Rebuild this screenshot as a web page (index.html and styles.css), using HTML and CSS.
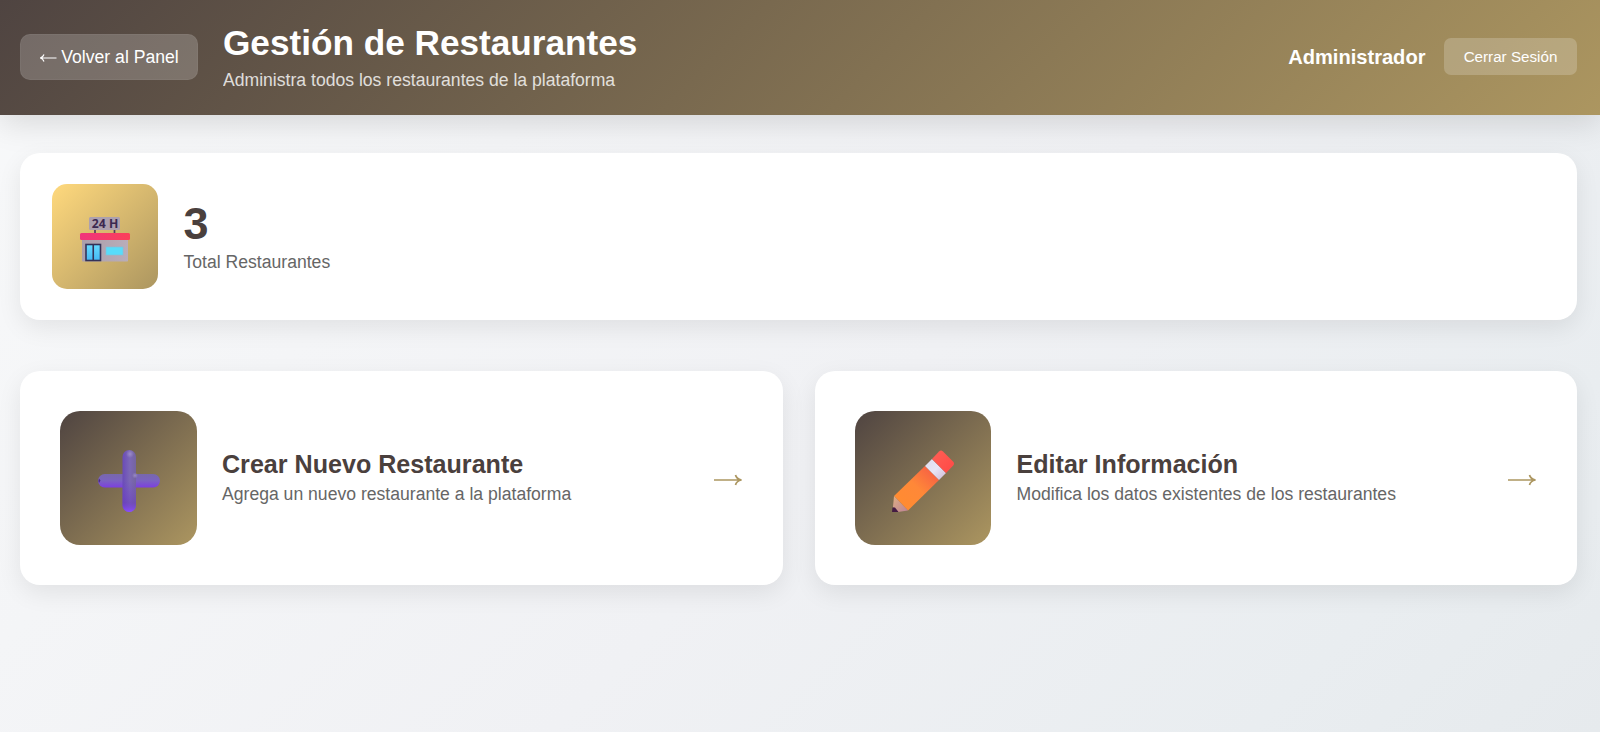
FILE: index.html
```html
<!DOCTYPE html>
<html lang="es">
<head>
<meta charset="utf-8">
<title>Gestión de Restaurantes</title>
<link rel="stylesheet" href="styles.css">
</head>
<body>
<header class="header">
  <div class="header-left">
    <button class="back-btn"><svg class="back-arrow" viewBox="0 0 18 12"><path d="M17.500 6H1.500M5 2.500Q4 5.300 1.200 6Q4 6.700 5 9.500"/></svg><span class="back-label">Volver al Panel</span></button>
    <div class="heading">
      <h1 class="title">Gestión de Restaurantes</h1>
      <p class="subtitle">Administra todos los restaurantes de la plataforma</p>
    </div>
  </div>
  <div class="header-right">
    <span class="user">Administrador</span>
    <button class="logout-btn">Cerrar Sesión</button>
  </div>
</header>
<main class="main">
  <section class="stat-card">
    <div class="stat-icon">
      <svg class="store" viewBox="0 0 52 48">
        <defs>
          <linearGradient id="roof"><stop offset="0" stop-color="#f0357c"/><stop offset="1" stop-color="#fb4059"/></linearGradient>
          <linearGradient id="wall"><stop offset="0" stop-color="#aa9fab"/><stop offset="1" stop-color="#b9adb9"/></linearGradient>
          <linearGradient id="glass" x2="0" y2="1"><stop offset="0" stop-color="#66dcff"/><stop offset="1" stop-color="#45b8f5"/></linearGradient>
        </defs>
        <path d="M16 13v5M35.500 13v5" stroke="#54415c" stroke-width="1.700"/>
        <rect x="10" y="1" width="31" height="13" rx="1.500" fill="#aca0ae"/>
        <text class="store-sign" x="12.800" y="11.500" textLength="26.500" lengthAdjust="spacingAndGlyphs">24 H</text>
        <rect x="3" y="22" width="46" height="23.500" rx=".8" fill="url(#wall)"/>
        <rect x="1" y="17" width="50" height="7" rx="1.500" fill="url(#roof)"/>
        <rect x="7" y="28.500" width="14.500" height="16" fill="url(#glass)" stroke="#343258" stroke-width="1.600"/>
        <path d="M14.250 28.500v16" stroke="#343258" stroke-width="1.600"/>
        <rect x="27" y="31" width="17" height="8" fill="#58dcfa" stroke="#83bfd6" stroke-width=".7"/>
      </svg>
    </div>
    <div>
      <div class="stat-number">3</div>
      <div class="stat-label">Total Restaurantes</div>
    </div>
  </section>
  <section class="actions">
    <article class="action-card">
      <div class="action-icon">
        <svg class="emoji plus" viewBox="0 0 64 64">
          <defs>
            <linearGradient id="plus-h" x2="0" y2="1"><stop offset="0" stop-color="#7768ab"/><stop offset=".5" stop-color="#7b62c2"/><stop offset="1" stop-color="#7c3ee0"/></linearGradient>
            <linearGradient id="plus-v"><stop offset="0" stop-color="#6a4bb8"/><stop offset=".55" stop-color="#7c68b6"/><stop offset="1" stop-color="#74649f"/></linearGradient>
            <linearGradient id="plus-b" x2="0" y2="1"><stop offset=".5" stop-color="#6b35d5" stop-opacity="0"/><stop offset=".85" stop-color="#6937c3" stop-opacity=".5"/><stop offset="1" stop-color="#8c4dff"/></linearGradient>
            <radialGradient id="plus-tip"><stop offset="0" stop-color="#a99bd2"/><stop offset="1" stop-color="#a99bd2" stop-opacity="0"/></radialGradient>
          </defs>
          <rect x="1" y="25" width="62" height="13.500" rx="6.750" fill="url(#plus-h)"/>
          <path d="M2 29.500q-1 2 0 4.500l1.500-2.500z" fill="#4b2a86"/>
          <rect x="25.500" y="1" width="13.500" height="62" rx="6.750" fill="url(#plus-v)"/>
          <rect x="25.500" y="1" width="13.500" height="62" rx="6.750" fill="url(#plus-b)"/>
          <circle cx="33" cy="5" r="4" fill="url(#plus-tip)" opacity=".7"/>
          <circle cx="38" cy="26.500" r="3" fill="url(#plus-tip)" opacity=".7"/>
        </svg>
      </div>
      <div class="action-text">
        <h3 class="action-title">Crear Nuevo Restaurante</h3>
        <p class="action-desc">Agrega un nuevo restaurante a la plataforma</p>
      </div>
      <svg class="arrow" viewBox="0 0 30 14"><path d="M1 7h27M22.500 2Q23.500 6 28.500 7Q23.500 8 22.500 12"/></svg>
    </article>
    <article class="action-card">
      <div class="action-icon">
        <svg class="emoji" viewBox="0 0 64 64">
          <defs>
            <linearGradient id="body" gradientUnits="userSpaceOnUse" x1="12" y1="54" x2="44" y2="20"><stop offset="0" stop-color="#ff8b32"/><stop offset=".45" stop-color="#ff8838"/><stop offset="1" stop-color="#f65d45"/></linearGradient>
            <linearGradient id="wood" x2="1" y2="1"><stop offset="0" stop-color="#dfae83"/><stop offset="1" stop-color="#bd8395"/></linearGradient>
            <linearGradient id="band" x2="1" y2="1"><stop offset="0" stop-color="#dedbed"/><stop offset=".5" stop-color="#e8e5f5"/><stop offset="1" stop-color="#cdb8d7"/></linearGradient>
            <linearGradient id="eraser" x2="1" y2="1"><stop offset="0" stop-color="#ff6055"/><stop offset="1" stop-color="#ff4845"/></linearGradient>
          </defs>
          <path d="M3 47L34 17L48 31L17 61.500Z" fill="url(#body)"/>
          <path d="M3 47L2 58L7 63L17 61.500Z" fill="url(#wood)"/>
          <path d="M1.500 58.500L1 63H7.500L4 58.500Z" fill="#441c43"/>
          <path d="M34 17L41 10L55 24L48 31Z" fill="url(#band)"/>
          <path d="M41 10L48 2.500Q50 .5 52 2.500L62 12.500Q64 14.500 62 16.800L55 24Z" fill="url(#eraser)"/>
        </svg>
      </div>
      <div class="action-text">
        <h3 class="action-title">Editar Información</h3>
        <p class="action-desc">Modifica los datos existentes de los restaurantes</p>
      </div>
      <svg class="arrow" viewBox="0 0 30 14"><path d="M1 7h27M22.500 2Q23.500 6 28.500 7Q23.500 8 22.500 12"/></svg>
    </article>
  </section>
</main>
</body>
</html>
```
FILE: styles.css
```css
* { box-sizing: border-box; margin: 0; padding: 0; }
body {
  min-height: 732px;
  overflow: hidden;
  font-family: "Liberation Sans", Arial, sans-serif;
  color: #4a403d;
  background: linear-gradient(135deg, #f8f9fa 0%, #f0f1f4 55%, #e9edf0 85%, #e6eaed 100%);
}
button { border: 0; color: #fff; font-family: inherit; }
.header {
  height: 115px;
  padding: 0 23px 0 20px;
  display: flex;
  align-items: center;
  justify-content: space-between;
  background: linear-gradient(135deg, #4f4441, #ac9660);
  box-shadow: 0 8px 30px rgba(0, 0, 0, .13);
  color: #fff;
}
.header-left { display: flex; align-items: center; gap: 25px; padding-bottom: 2px; }
.header-right { display: flex; align-items: center; gap: 18.500px; padding-bottom: 2px; }
.back-btn {
  width: 178px;
  height: 46px;
  display: flex;
  align-items: center;
  justify-content: center;
  gap: 4px;
  border: 1px solid rgba(255, 255, 255, .04);
  border-radius: 10px;
  background: rgba(255, 255, 255, .2);
  font-size: 17.600px;
}
.back-arrow { width: 18px; height: 12px; margin-top: 3px; fill: none; stroke: #fff; stroke-width: 1.200; }
.back-label { padding-top: 2px; }
.title { font-size: 35.200px; line-height: 40px; letter-spacing: -.01px; }
.subtitle { margin-top: 7px; font-size: 17.600px; line-height: 20px; opacity: .8; }
.heading { padding-bottom: 0; }
.user { padding-top: 2px; font-size: 20.100px; font-weight: 700; }
.logout-btn {
  width: 133px;
  height: 37px;
  border-radius: 7px;
  background: rgba(255, 255, 255, .2);
  font-size: 15.200px;
}
.main { padding: 38px 23px 0 20px; }
.stat-card, .action-card {
  display: flex;
  align-items: center;
  gap: 26px;
  border-radius: 20px;
  background: #fff;
  box-shadow: 0 8px 25px rgba(0, 0, 0, .08);
}
.stat-card { height: 167px; padding: 0 32px; }
.stat-icon {
  width: 106px;
  height: 105px;
  margin-bottom: 1px;
  display: flex;
  align-items: center;
  justify-content: center;
  border-radius: 15px;
  background: linear-gradient(135deg, #ffd97d, #ac9660);
}
.store { width: 52px; height: 48px; margin-top: 8px; }
.store-sign { font: 700 12.500px "Open Sans", sans-serif; fill: #3b2850; }
.stat-number { font-size: 45px; font-weight: 700; line-height: 50px; }
.stat-label { margin-top: 1px; font-size: 17.600px; line-height: 24px; color: #666; }
.stat-number, .stat-label { margin-left: -.5px; }
.actions { display: grid; grid-template-columns: 1fr 1fr; gap: 32px; margin-top: 50.500px; }
.action-card { height: 214px; padding: 0 40px; gap: 25.500px; }
.action-icon {
  width: 136.500px;
  height: 134px;
  display: flex;
  flex-shrink: 0;
  align-items: center;
  justify-content: center;
  border-radius: 20px;
  background: linear-gradient(135deg, #4f4441, #ac9660);
}
.emoji { width: 64px; height: 64px; margin-top: 6px; }
.plus { margin-left: 1px; }
.action-text { flex: 1; padding-bottom: 3px; }
.action-title { font-size: 25.100px; line-height: 30px; }
.action-desc { font-size: 17.600px; line-height: 20px; margin-top: 5px; color: #666; }
.arrow { width: 30px; height: 14px; margin-top: 4px; fill: none; stroke: #ac9660; stroke-width: 1.700; }
```
